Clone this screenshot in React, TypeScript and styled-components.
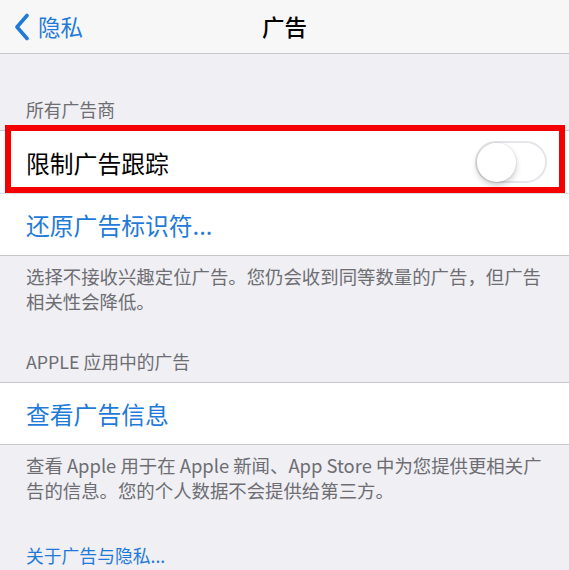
import React from "react"
import styled, { createGlobalStyle } from "styled-components"

const GlobalStyle = createGlobalStyle`
  body {
    margin: 0;
    background: #efeff4;
    font-family: "Noto Sans CJK SC", "Noto Sans", "Liberation Sans", sans-serif;
  }
`

const Page = styled.div`
  width: 569px;
  height: 570px;
  overflow: hidden;
  background: #efeff4;
`

const NavBar = styled.header`
  height: 53px;
  border-bottom: 1px solid #c8c7cc;
  background: #f7f7f8;
  display: grid;
  grid-template-columns: 1fr auto 1fr;
  align-items: center;
`

const BackButton = styled.div`
  display: flex;
  align-items: center;
  gap: 8px;
  padding-left: 14px;
  color: #1f7ad8;
  font-size: 22.5px;
  line-height: 1;
`

const NavTitle = styled.h1`
  margin: 0;
  font-size: 22.5px;
  font-weight: 500;
  color: #000;
  line-height: 1;
`

const GroupHeader = styled.div<{ $top: number }>`
  padding: ${p => p.$top}px 26px 8px;
  font-size: 17.8px;
  line-height: 25px;
  color: #6d6d72;
`

const Group = styled.div`
  background: #fff;
  border-top: 1px solid #c8c7cc;
  border-bottom: 1px solid #c8c7cc;
`

const Cell = styled.div<{ $height: number }>`
  position: relative;
  height: ${p => p.$height}px;
  display: flex;
  align-items: center;
  justify-content: space-between;
  padding: 0 22px 0 26px;
  & + & {
    border-top: 1px solid #e0e0e4;
  }
`

const Label = styled.span<{ $link?: boolean }>`
  font-size: 23.8px;
  color: ${p => (p.$link ? "#1f7ad8" : "#000")};
`

const Highlight = styled.div`
  position: absolute;
  top: -6px;
  bottom: 0;
  left: 5px;
  right: 4px;
  border: 6px solid #f50000;
  pointer-events: none;
`

const Switch = styled.div`
  width: 72px;
  height: 42px;
  box-sizing: border-box;
  border: 2px solid #e5e5ea;
  border-radius: 21px;
  background: #fff;
  display: flex;
  align-items: center;
`

const Knob = styled.div`
  width: 39px;
  height: 39px;
  border-radius: 50%;
  background: #fff;
  box-shadow: 0 3px 6px rgba(0, 0, 0, 0.22), 0 0 0 1px rgba(0, 0, 0, 0.04);
`

const Footer = styled.p`
  margin: 0;
  padding: 8px 26px 0;
  font-size: 18.4px;
  line-height: 25px;
  color: #6d6d72;
`

const FooterLink = styled.div`
  margin-top: 40px;
  padding: 0 26px;
  font-size: 17.8px;
  line-height: 25px;
  color: #1f7ad8;
`

const Chevron = () => (
  <svg width="16" height="28" viewBox="0 0 16 28">
    <polyline
      points="13,2.5 3,14 13,25.5"
      fill="none"
      stroke="#1f7ad8"
      strokeWidth="3.6"
      strokeLinecap="round"
      strokeLinejoin="round"
    />
  </svg>
)

const App = () => (
  <Page>
    <GlobalStyle />
    <NavBar>
      <BackButton>
        <Chevron />
        <span>隐私</span>
      </BackButton>
      <NavTitle>广告</NavTitle>
      <div />
    </NavBar>

    <GroupHeader $top={43}>所有广告商</GroupHeader>
    <Group>
      <Cell $height={62}>
        <Label>限制广告跟踪</Label>
        <Switch>
          <Knob />
        </Switch>
        <Highlight />
      </Cell>
      <Cell $height={61}>
        <Label $link>还原广告标识符...</Label>
      </Cell>
    </Group>
    <Footer>
      选择不接收兴趣定位广告。您仍会收到同等数量的广告，但广告相关性会降低。
    </Footer>

    <GroupHeader $top={35}>APPLE 应用中的广告</GroupHeader>
    <Group>
      <Cell $height={61}>
        <Label $link>查看广告信息</Label>
      </Cell>
    </Group>
    <Footer>
      查看 Apple 用于在 Apple 新闻、App Store 中为您提供更相关广告的信息。您的个人数据不会提供给第三方。
    </Footer>

    <FooterLink>关于广告与隐私...</FooterLink>
  </Page>
)

export default App
